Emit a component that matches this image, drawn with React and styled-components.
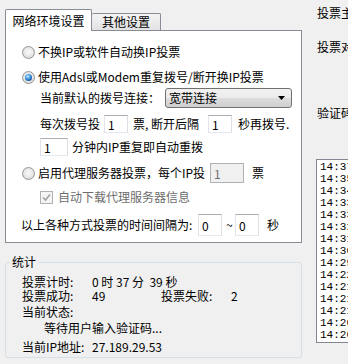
import React from "react"
import styled, { createGlobalStyle } from "styled-components"

const GlobalStyle = createGlobalStyle`
  html, body {
    margin: 0;
    padding: 0;
    background: #f0f0f0;
  }
  body {
    width: 348px;
    height: 364px;
    overflow: hidden;
    font-family: "Noto Sans CJK SC", "Liberation Sans", sans-serif;
    font-size: 12px;
    color: #000;
  }
`

const Window = styled.div`
  display: flex;
  width: 348px;
  height: 364px;
  padding-left: 5px;
  box-sizing: border-box;
  overflow: hidden;
`

const LeftCol = styled.div`
  width: 297px;
  flex-shrink: 0;
  padding-top: 9px;
  display: flex;
  flex-direction: column;
`

const TabStrip = styled.div`
  display: flex;
  align-items: flex-end;
  height: 21px;
`

const Tab = styled.div`
  box-sizing: border-box;
  width: ${p => (p.$active ? 87 : 69)}px;
  height: ${p => (p.$active ? 22 : 17)}px;
  margin-bottom: ${p => (p.$active ? -1 : 0)}px;
  border: 1px solid #898c95;
  border-bottom: none;
  border-left: ${p => (p.$active ? "1px solid #898c95" : "none")};
  border-radius: 2px 2px 0 0;
  background: ${p =>
    p.$active ? "#fff" : "linear-gradient(#f4f4f4, #ebebeb 50%, #e2e2e2)"};
  display: flex;
  align-items: center;
  justify-content: center;
  line-height: 14px;
  position: relative;
  z-index: ${p => (p.$active ? 2 : 1)};
`

const Panel = styled.div`
  height: 213px;
  box-sizing: border-box;
  border: 1px solid #898c95;
  background: #fff;
  padding-top: 13px;
  display: flex;
  flex-direction: column;
`

const Row = styled.div`
  display: flex;
  align-items: center;
  height: ${p => p.$h || 16}px;
  margin-top: ${p => p.$mt || 0}px;
  padding-left: ${p => p.$indent || 0}px;
  white-space: nowrap;
  line-height: 14px;
`

const Text = styled.span`
  flex-shrink: 0;
  margin-left: ${p => p.$ml || 0}px;
  width: ${p => (p.$w ? `${p.$w}px` : "auto")};
  color: ${p => (p.$muted ? "#6d6d6d" : "#000")};
`

const Radio = styled.span`
  width: 13px;
  height: 13px;
  flex-shrink: 0;
  box-sizing: border-box;
  border-radius: 50%;
  border: 1px solid #959595;
  background: radial-gradient(circle at 50% 45%, #fbfbfb 0%, #e6e6e6 55%, #cdcdcd 100%);
  display: flex;
  align-items: center;
  justify-content: center;
  margin-right: 3px;

  &::after {
    content: "";
    display: ${p => (p.$checked ? "block" : "none")};
    width: 7px;
    height: 7px;
    border-radius: 50%;
    background: radial-gradient(circle at 40% 35%, #c9ecff 0%, #4fa3e8 35%, #1a5aa6 70%, #0d3567 100%);
  }
`

const CheckBox = styled.span`
  width: 13px;
  height: 13px;
  flex-shrink: 0;
  box-sizing: border-box;
  border: 1px solid #b1b1b1;
  background: #f4f4f4;
  display: flex;
  align-items: center;
  justify-content: center;
  margin-right: 5px;
`

const TextBox = styled.input`
  box-sizing: border-box;
  flex-shrink: 0;
  width: ${p => p.$w}px;
  height: ${p => p.$h || 18}px;
  margin: 0 0 0 ${p => p.$ml || 0}px;
  padding: 0 0 0 3px;
  border: 1px solid;
  border-color: #abadb3 #dbdfe6 #e3e9ef #e2e3ea;
  border-radius: 0;
  outline: none;
  background: #fff;
  font-family: "Noto Sans CJK SC", "Liberation Sans", sans-serif;
  font-size: 12px;
  color: #000;

  &:disabled {
    border-color: #adb2b5;
    background: #f0f0f0;
    color: #6d6d6d;
  }
`

const Select = styled.div`
  box-sizing: border-box;
  width: 127px;
  height: 20px;
  margin-left: 5px;
  padding: 0 6px 0 3px;
  border: 1px solid #707070;
  border-radius: 3px;
  background: linear-gradient(#f2f2f2 0%, #ebebeb 50%, #dddddd 50%, #cfcfcf 100%);
  display: flex;
  align-items: center;
  justify-content: space-between;
`

const GroupBox = styled.fieldset`
  margin: 11px 0 0 0;
  padding: 0 0 3px 0;
  border: 1px solid #d5dfe5;
  border-radius: 3px;
  min-width: 0;
`

const Legend = styled.legend`
  margin-left: 4px;
  padding: 0 2px;
  line-height: 16px;
`

const StatsBody = styled.div`
  padding: 5px 0 0 16px;
  display: flex;
  flex-direction: column;
`

const StatRow = styled.div`
  display: flex;
  align-items: center;
  height: 14px;
  margin-top: ${p => p.$mt || 0}px;
  padding-left: ${p => p.$indent || 0}px;
  white-space: pre;
  line-height: 14px;
`

const StatLabel = styled.span`
  width: 70px;
  flex-shrink: 0;
`

const StatValue = styled.span`
  width: ${p => (p.$w ? `${p.$w}px` : "auto")};
  flex-shrink: 0;
`

const RightCol = styled.div`
  margin-left: 14px;
  width: 60px;
  flex-shrink: 0;
  display: flex;
  flex-direction: column;
`

const SideLabel = styled.div`
  margin-top: ${p => p.$mt}px;
  padding-left: 1px;
  line-height: 16px;
  white-space: nowrap;
`

const ListBox = styled.div`
  margin-top: 38px;
  width: 60px;
  height: 184px;
  box-sizing: border-box;
  border: 1px solid #828790;
  background: #fff;
  padding: 1px 0 0 3px;
  overflow: hidden;
`

const ListItem = styled.div`
  font-family: "Liberation Mono", "DejaVu Sans Mono", monospace;
  font-size: 11px;
  line-height: 12px;
  white-space: nowrap;
`

const logTimes = [
  "14:37:39", "14:35:12", "14:34:50", "14:33:41", "14:33:02",
  "14:31:47", "14:31:10", "14:30:25", "14:29:58", "14:22:36",
  "14:21:49", "14:21:20", "14:21:03", "14:20:41", "14:20:15",
]

const DropArrow = () => (
  <svg width="7" height="4" viewBox="0 0 7 4">
    <polygon points="0,0 7,0 3.5,4" fill="#000" />
  </svg>
)

const CheckMark = () => (
  <svg width="9" height="9" viewBox="0 0 9 9">
    <path d="M1 4.5 L3.5 7 L8 1.5" fill="none" stroke="#a3a3a3" strokeWidth="1.6" />
  </svg>
)

const App = () => (
  <>
    <GlobalStyle />
    <Window>
      <LeftCol>
        <TabStrip>
          <Tab $active>网络环境设置</Tab>
          <Tab>其他设置</Tab>
        </TabStrip>
        <Panel>
          <Row $indent={16}>
            <Radio />
            <Text>不换IP或软件自动换IP投票</Text>
          </Row>
          <Row $indent={16} $mt={9}>
            <Radio $checked />
            <Text>使用Adsl或Modem重复拨号/断开换IP投票</Text>
          </Row>
          <Row $indent={34} $mt={3} $h={20}>
            <Text $w={120}>当前默认的拨号连接：</Text>
            <Select>
              <span>宽带连接</span>
              <DropArrow />
            </Select>
          </Row>
          <Row $indent={34} $mt={7} $h={18}>
            <Text $w={60}>每次拨号投</Text>
            <TextBox $w={24} $ml={4} defaultValue="1" readOnly />
            <Text $ml={5} $w={75}>票, 断开后隔</Text>
            <TextBox $w={24} defaultValue="1" readOnly />
            <Text $ml={6}>秒再拨号.</Text>
          </Row>
          <Row $indent={34} $mt={5} $h={18}>
            <TextBox $w={28} defaultValue="1" readOnly />
            <Text $ml={4}>分钟内IP重复即自动重拨</Text>
          </Row>
          <Row $indent={16} $mt={7} $h={20}>
            <Radio />
            <Text $w={172}>启用代理服务器投票，每个IP投</Text>
            <TextBox $w={34} $h={20} defaultValue="1" disabled />
            <Text $ml={8}>票</Text>
          </Row>
          <Row $indent={34} $mt={6}>
            <CheckBox>
              <CheckMark />
            </CheckBox>
            <Text $muted>自动下载代理服务器信息</Text>
          </Row>
          <Row $indent={15} $mt={9} $h={22}>
            <Text $w={177}>以上各种方式投票的时间间隔为:</Text>
            <TextBox $w={24} $h={22} defaultValue="0" readOnly />
            <Text $ml={4} $w={9}>~</Text>
            <TextBox $w={24} $h={22} defaultValue="0" readOnly />
            <Text $ml={8}>秒</Text>
          </Row>
        </Panel>
        <GroupBox>
          <Legend>统计</Legend>
          <StatsBody>
            <StatRow>
              <StatLabel>投票计时:</StatLabel>
              <StatValue>0 时 37 分  39 秒</StatValue>
            </StatRow>
            <StatRow>
              <StatLabel>投票成功:</StatLabel>
              <StatValue $w={69}>49</StatValue>
              <StatLabel>投票失败:</StatLabel>
              <StatValue>2</StatValue>
            </StatRow>
            <StatRow $mt={2}>
              <StatLabel>当前状态:</StatLabel>
            </StatRow>
            <StatRow $mt={2} $indent={22}>
              等待用户输入验证码...
            </StatRow>
            <StatRow $mt={5}>
              <StatLabel>当前IP地址:</StatLabel>
              <StatValue>27.189.29.53</StatValue>
            </StatRow>
          </StatsBody>
        </GroupBox>
      </LeftCol>
      <RightCol>
        <SideLabel $mt={5}>投票主题：</SideLabel>
        <SideLabel $mt={18}>投票对象：</SideLabel>
        <SideLabel $mt={50}>验证码：</SideLabel>
        <ListBox>
          {logTimes.map((t, i) => (
            <ListItem key={i}>{t}</ListItem>
          ))}
        </ListBox>
      </RightCol>
    </Window>
  </>
)

export default App
